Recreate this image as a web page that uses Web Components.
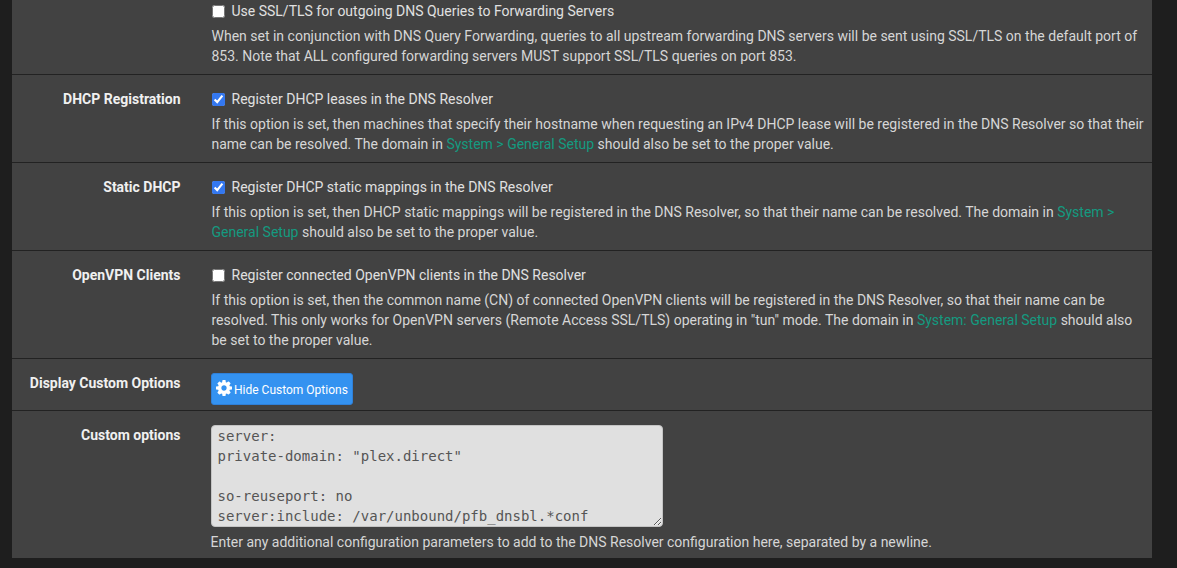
<!DOCTYPE html>
<html lang="en">
<head>
<meta charset="utf-8">
<title>DNS Resolver</title>
<style>
  html, body { margin: 0; height: 100%; overflow: hidden; background: #1e1e1e; }
  body { font: 14px/20px Roboto, "Liberation Sans", sans-serif; color: #e0e0e0; }
</style>
</head>
<body>
<settings-panel>
  <form-row>
    <check-option>Use SSL/TLS for outgoing DNS Queries to Forwarding Servers</check-option>
    <help-text>When set in conjunction with DNS Query Forwarding, queries to all upstream forwarding DNS servers will be sent using SSL/TLS on the default port of 853. Note that ALL configured forwarding servers MUST support SSL/TLS queries on port 853.</help-text>
  </form-row>
  <form-row label="DHCP Registration">
    <check-option checked>Register DHCP leases in the DNS Resolver</check-option>
    <help-text>If this option is set, then machines that specify their hostname when requesting an IPv4 DHCP lease will be registered in the DNS Resolver so that their name can be resolved. The domain in <a href="#">System &gt; General Setup</a> should also be set to the proper value.</help-text>
  </form-row>
  <form-row label="Static DHCP">
    <check-option checked>Register DHCP static mappings in the DNS Resolver</check-option>
    <help-text>If this option is set, then DHCP static mappings will be registered in the DNS Resolver, so that their name can be resolved. The domain in <a href="#">System &gt; General Setup</a> should also be set to the proper value.</help-text>
  </form-row>
  <form-row label="OpenVPN Clients">
    <check-option>Register connected OpenVPN clients in the DNS Resolver</check-option>
    <help-text>If this option is set, then the common name (CN) of connected OpenVPN clients will be registered in the DNS Resolver, so that their name can be resolved. This only works for OpenVPN servers (Remote Access SSL/TLS) operating in "tun" mode. The domain in <a href="#">System: General Setup</a> should also be set to the proper value.</help-text>
  </form-row>
  <form-row label="Display Custom Options" compact>
    <icon-button>Hide Custom Options</icon-button>
  </form-row>
  <form-row label="Custom options" last>
    <config-area>server:
private-domain: "plex.direct"

so-reuseport: no
server:include: /var/unbound/pfb_dnsbl.*conf</config-area>
    <help-text tight>Enter any additional configuration parameters to add to the DNS Resolver configuration here, separated by a newline.</help-text>
  </form-row>
</settings-panel>

<script>
// Small helper so every element gets an open shadow root from a template
function defineElement(name, html, Base = HTMLElement) {
  const template = document.createElement('template');
  template.innerHTML = html;

  customElements.define(name, class extends Base {
    constructor() {
      super();
      this.attachShadow({ mode: 'open' });
      this.shadowRoot.appendChild(template.content.cloneNode(true));
    }

    connectedCallback() {
      if (this.setup) this.setup();
    }
  });
}

defineElement('settings-panel', /* html */`
  <style>
    :host {
      display: block;
      margin: -13px 25px 0 12px;
      background: #424242;
    }
  </style>
  <slot></slot>
`);

class FormRowBase extends HTMLElement {
  setup() {
    this.shadowRoot.querySelector('.label').textContent = this.getAttribute('label') || '';
  }
}

defineElement('form-row', /* html */`
  <style>
    :host {
      display: grid;
      grid-template-columns: 168.5px 1fr;
      column-gap: 31px;
      padding: 14px 8px 8px 0;
      border-bottom: 1px solid #222;
    }
    :host([compact]) { padding-bottom: 5px; }
    :host([last]) { border-bottom: 0; padding-bottom: 6px; }
    .label {
      text-align: right;
      font-weight: 700;
      color: #f0f0f0;
    }
    .field { min-width: 0; }
  </style>
  <div class="label"></div>
  <div class="field"><slot></slot></div>
`, FormRowBase);

defineElement('check-option', /* html */`
  <style>
    :host {
      display: flex;
      align-items: center;
      gap: 7px;
      color: #e0e0e0;
    }
    input { width: 13px; height: 13px; margin: 0; flex: none; accent-color: #3478f0; }
  </style>
  <input type="checkbox">
  <span><slot></slot></span>
`, class extends HTMLElement {
  setup() {
    this.shadowRoot.querySelector('input').checked = this.hasAttribute('checked');
  }
});

defineElement('help-text', /* html */`
  <style>
    :host {
      display: block;
      margin-top: 5px;
      color: #d6d6d6;
    }
    :host([tight]) { margin-left: -1px; }
    ::slotted(a) { color: #149a80; text-decoration: none; }
  </style>
  <slot></slot>
`);

defineElement('icon-button', /* html */`
  <style>
    :host { display: block; margin-left: -0.5px; }
    button {
      display: flex;
      align-items: center;
      gap: 2px;
      box-sizing: border-box;
      height: 32px;
      width: 142px;
      margin: 0;
      padding: 0 4px;
      border: 1px solid #2f80d8;
      border-radius: 3px;
      background: #3492f0;
      color: #fff;
      font: 12px/18px Roboto, "Liberation Sans", sans-serif;
      white-space: nowrap;
    }
    svg { width: 16px; height: 16px; flex: none; margin-top: -3px; }
    span { margin-top: 1px; }
  </style>
  <button type="button">
    <svg viewBox="128 128 1536 1536" aria-hidden="true"><path fill="#fff" d="M1152 896q0-106-75-181t-181-75-181 75-75 181 75 181 181 75 181-75 75-181zm512-109v222q0 12-8 23t-20 13l-185 28q-19 54-39 91 35 50 107 138 10 12 10 25t-9 23q-27 37-99 108t-94 71q-12 0-26-9l-138-108q-44 23-91 38-16 136-29 186-7 28-36 28h-222q-14 0-24.5-8.5t-11.5-21.5l-28-184q-49-16-90-37l-141 107q-10 9-25 9-14 0-25-11-126-114-165-168-7-10-7-23 0-12 8-23 15-21 51-66.5t54-70.5q-27-50-41-99l-183-27q-13-2-21-12.5t-8-23.5v-222q0-12 8-23t19-13l186-28q14-46 39-92-40-57-107-138-10-12-10-24 0-10 9-23 26-36 98.5-107.5t94.5-71.5q13 0 26 10l138 107q44-23 91-38 16-136 29-186 7-28 36-28h222q14 0 24.5 8.5t11.5 21.5l28 184q49 16 90 37l142-107q9-9 24-9 13 0 25 10 129 119 165 170 7 8 7 22 0 12-8 23-15 21-51 66.5t-54 70.5q26 50 41 98l183 28q13 2 21 12.5t8 23.5z"/></svg>
    <span><slot></slot></span>
  </button>
`);

defineElement('config-area', /* html */`
  <style>
    :host { display: block; margin-left: -0.5px; }
    textarea {
      display: block;
      box-sizing: border-box;
      width: 452px;
      height: 102px;
      margin: 0;
      padding: 0 5.5px;
      border: 1px solid #c4c4c4;
      border-radius: 4px;
      outline: 0;
      overflow: hidden;
      resize: vertical;
      background: #e0e0e0;
      color: #555;
      font: 14px/20px "DejaVu Sans Mono", monospace;
      white-space: pre;
    }
  </style>
  <textarea spellcheck="false"></textarea>
`, class extends HTMLElement {
  setup() {
    this.shadowRoot.querySelector('textarea').value = this.textContent;
  }
});
</script>
</body>
</html>
